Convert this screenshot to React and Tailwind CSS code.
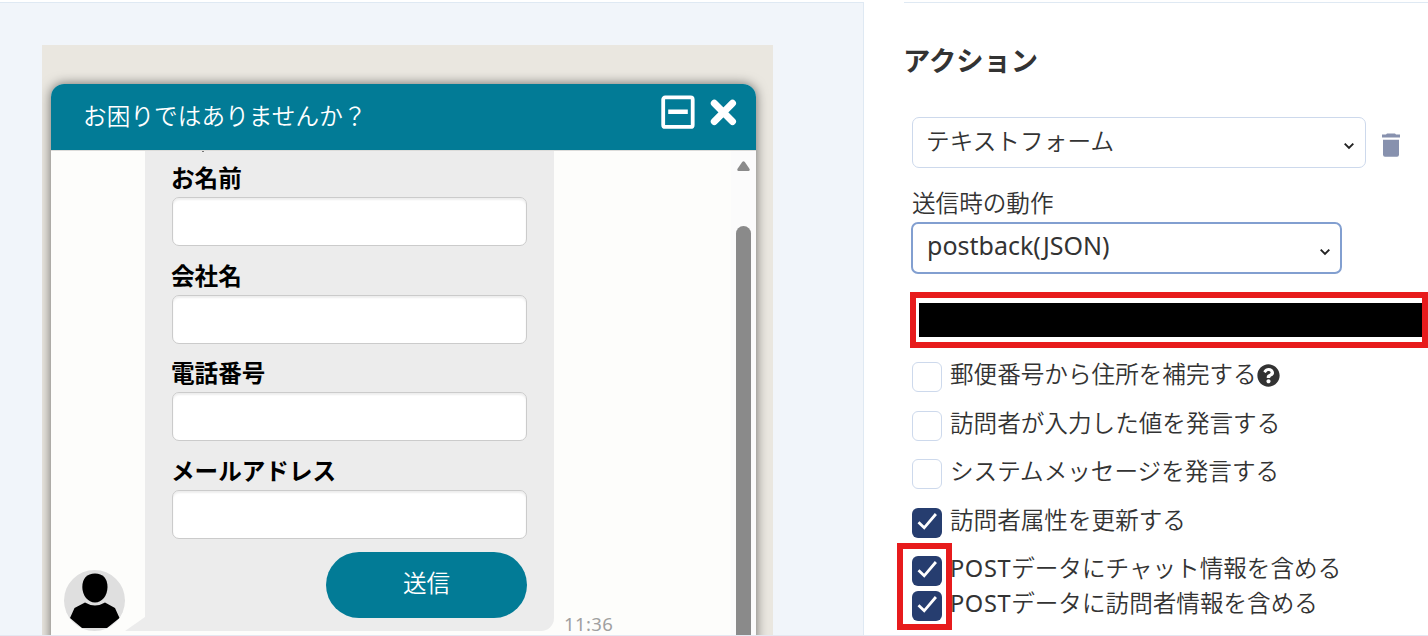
import { FaQuestionCircle } from 'react-icons/fa';

const fields = ['お名前', '会社名', '電話番号', 'メールアドレス'];

const options = [
  { label: '郵便番号から住所を補完する', checked: false, help: true, row: 'h-[49px]' },
  { label: '訪問者が入力した値を発言する', checked: false, row: 'h-12' },
  { label: 'システムメッセージを発言する', checked: false, row: 'h-[49px]' },
  { label: '訪問者属性を更新する', checked: true, row: 'h-12' },
  { prefix: 'POST', label: 'データにチャット情報を含める', checked: true, row: 'h-[35px]' },
  { prefix: 'POST', label: 'データに訪問者情報を含める', checked: true, row: 'h-[35px]' },
];

const Chevron = () => (
  <svg className="w-3 h-3 mt-[7px]" viewBox="0 0 12 12" fill="none" stroke="#222" strokeWidth="1.9">
    <path d="M1.7 3.6 6 8l4.3-4.4" />
  </svg>
);

const Checkbox = ({ checked }) => {
  if (!checked) {
    return <span className="w-[30px] h-[30px] shrink-0 rounded-[6px] border border-[#cdd9ec] bg-white"></span>;
  }

  return (
    <span className="w-[30px] h-[30px] shrink-0 rounded-[6px] bg-[#263d6f]">
      <svg viewBox="0 0 30 30" fill="none" stroke="white" strokeWidth="2.8">
        <path d="M6.5 14.3 12.2 19.8 23.9 6" />
      </svg>
    </span>
  );
};

const Avatar = () => (
  <svg className="w-[61px] h-[61px]" viewBox="0 0 61 61">
    <defs>
      <clipPath id="avatar-clip">
        <circle cx="30.5" cy="30.5" r="30.5" />
      </clipPath>
    </defs>
    <g clipPath="url(#avatar-clip)">
      <rect width="61" height="61" fill="#dfdfdf" />
      <path d="M31 3.5C39 3.5 43.5 8.5 43.5 17S38 32.5 31 32.5 18.3 25.5 18.3 17 23 3.5 31 3.5Z" />
      <path d="M21 32.5Q31 38.5 41 32.5L51 38 55.5 48 43 58H18L6 48 10.5 38Z" />
    </g>
  </svg>
);

const ChatPreview = () => (
  <section className="w-[864px] shrink-0 border-t border-r border-[#dfe9f3] bg-[#f1f5fa] pl-[42px] pt-[42px]">
    <div className="w-[731px] h-[590px] overflow-hidden bg-[#eae7e0] pl-[9px] pt-[39px]">
      <div className="w-[705px] h-[570px] rounded-t-[13px] overflow-hidden bg-[#fdfdfb] shadow-[0_0_12px_0_rgba(0,0,0,0.55)]">
        <header className="h-[66px] flex items-start bg-[#027b96] pl-8 pr-[19px] text-white">
          <h2 className="flex-1 leading-[64px] tracking-[0.1px]">お困りではありませんか？</h2>
          <svg className="w-[34px] h-[34px] mt-[11px] mr-[15px]" viewBox="0 0 34 34" fill="none" stroke="white">
            <rect x="2.2" y="2.4" width="29.5" height="29.5" rx="2" strokeWidth="3.8" />
            <path d="M7.2 16.8H26.8" strokeWidth="4.5" />
          </svg>
          <svg className="w-[27px] h-[27px] mt-[15px]" viewBox="0 0 27 27" fill="none" stroke="white" strokeWidth="7" strokeLinecap="round">
            <path d="M4.3 4.3 22.5 22.5M22.5 4.3 4.3 22.5" />
          </svg>
        </header>

        <div className="h-[485px] flex border-t border-[#dcdcda]">
          <div className="w-[94px] shrink-0 flex flex-col justify-end pl-[13px] pb-1">
            <div className="flex items-end">
              <Avatar />
              <svg className="w-5 h-[14px] shrink-0" viewBox="0 0 20 14">
                <path d="M20 0V14H0Z" fill="#ececec" />
              </svg>
            </div>
          </div>

          <div className="w-[409px] h-[480px] shrink-0 rounded-br-[13px] bg-[#ececec] px-[27px]">
            {/* tail of the message scrolled out above */}
            <span className="block w-0.5 h-px ml-[30px] mb-[6px] bg-[#777]"></span>
            <div className="flex flex-col gap-[9.67px]">
              {fields.map((field) => (
                <div key={field}>
                  <label className="block h-[39px] -ml-px leading-10 font-bold text-black">{field}</label>
                  <input
                    type="text"
                    className="block w-[355px] h-[49px] rounded-[7px] border border-[#cbcbcb] bg-white shadow-[inset_0_2px_2px_rgba(0,0,0,0.07)]"
                  />
                </div>
              ))}
            </div>
            <button className="block w-[201px] h-[66px] ml-auto mt-[13px] rounded-full bg-[#027b96] pb-[3px] leading-none text-white">
              送信
            </button>
          </div>

          <div className="flex-1 flex items-end pl-[10px]">
            <span className="text-[18.5px] leading-[22px] font-normal tracking-[0.4px] text-[#a0a0a0]">11:36</span>
          </div>

          <div className="w-[25px] flex flex-col items-center bg-[#fbfbfb]">
            <svg className="w-[13px] h-[10px] mt-[10px]" viewBox="0 0 13 10" fill="#8a8a8a">
              <path d="M5.2 1Q6.5-.7 7.8 1L12.6 8Q13 9.7 11.5 10H1.5Q0 9.7.4 8Z" />
            </svg>
            <div className="w-[15px] flex-1 mt-[55px] rounded-t-full bg-[#8a8a8a]"></div>
          </div>
        </div>
      </div>
    </div>
  </section>
);

const ActionPanel = () => (
  <section className="flex-1 pl-10">
    <div className="h-px bg-[#dfe9f3]"></div>
    <h1 className="-ml-px mt-[38px] h-10 text-[27.3px] leading-10 font-bold">アクション</h1>

    <div className="ml-2 mt-9 flex items-center">
      <div className="w-[454px] h-[51px] flex items-center justify-between rounded-[7px] border border-[#cdd9ec] pl-[13px] pr-[10px]">
        <span className="pb-[2px] tracking-[0.1px]">テキストフォーム</span>
        <Chevron />
      </div>
      <svg className="w-[18px] h-[24px] ml-4 mt-[5px]" viewBox="0 0 18 24" fill="#8791ae">
        <path d="M5 .6H13L14 1.5H18V4.5H0V1.5H4Z" />
        <path d="M1 6.8H17V21.5Q17 23.7 15 23.7H3Q1 23.7 1 21.5Z" />
      </svg>
    </div>

    <p className="ml-2 mt-[17px] h-[37px] leading-[37px]">送信時の動作</p>
    <div className="ml-[7px] w-[431px] h-[52px] flex items-center justify-between rounded-[7px] border-2 border-[#829fd0] pl-[14px] pr-[9px]">
      <span className="pb-[6px] text-[25px] leading-9 font-normal">postback(JSON)</span>
      <Chevron />
    </div>

    <div className="ml-1.5 mt-[18px] h-14 border-6 border-[#e71b1c] pl-[3px] py-[5px]">
      <div className="h-full bg-black"></div>
    </div>

    <div className="relative ml-2 mt-[14px]">
      {options.map((option) => (
        <label key={option.label} className={`flex items-start ${option.row}`}>
          <Checkbox checked={option.checked} />
          <span className="ml-2 -mt-[5px] leading-[35px] whitespace-nowrap">
            {option.prefix && <span className="font-normal tracking-[0.6px]">{option.prefix}</span>}
            {option.label}
          </span>
          {option.help && <FaQuestionCircle className="w-[23px] h-[23px] mt-[2px]" />}
        </label>
      ))}
      {/* highlight over the POST data checkboxes */}
      <div className="absolute -left-[15px] top-[181px] w-[55px] h-[87px] border-6 border-[#e71b1c]"></div>
    </div>
  </section>
);

export default function App() {
  return (
    <main className="w-[1428px] h-[636px] flex flex-col overflow-hidden border-b border-[#e4e7f1] bg-white pt-[2px] font-['Noto_Sans','Noto_Sans_CJK_JP',sans-serif] text-[23.6px] font-[350] text-[#333]">
      <div className="flex flex-1 min-h-0">
        <ChatPreview />
        <ActionPanel />
      </div>
    </main>
  );
}
